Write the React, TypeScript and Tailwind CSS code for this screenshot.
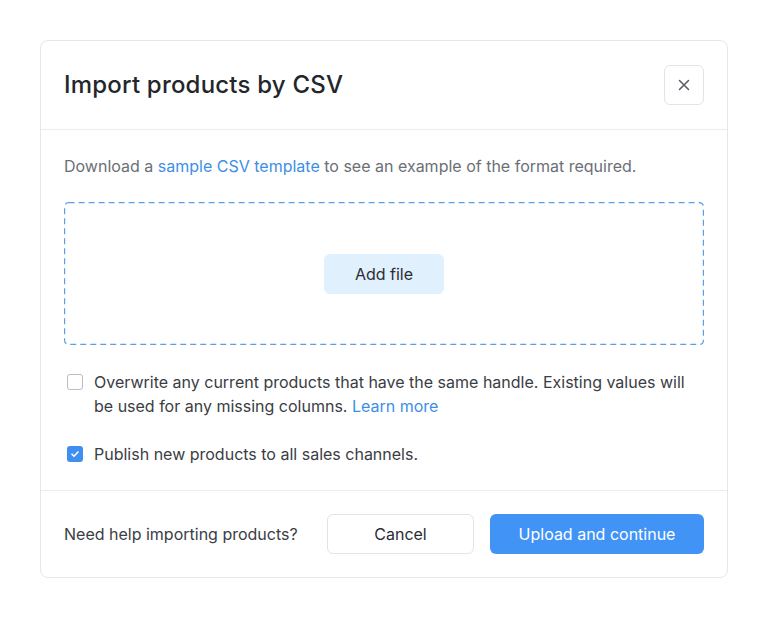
import React from 'react';

const CheckRow: React.FC<{ checked?: boolean; children: React.ReactNode }> = ({ checked, children }) => (
  <label className="flex items-start gap-[11px] pl-[3px]">
    <span
      className={
        checked
          ? 'mt-1 flex h-4 w-4 shrink-0 items-center justify-center rounded-[3px] bg-[#3f8ff0]'
          : 'mt-1 flex h-4 w-4 shrink-0 items-center justify-center rounded-[3px] border border-[#b9bcc2] bg-white'
      }
    >
      {checked && (
        <svg width="10" height="10" viewBox="0 0 10 10" fill="none">
          <path d="M2 5.2l2 2L8 3" stroke="white" strokeWidth="1.6" strokeLinecap="round" strokeLinejoin="round" />
        </svg>
      )}
    </span>
    <span className="text-base leading-6 text-[#3a3d44]">{children}</span>
  </label>
);

const ImportDialog: React.FC = () => {
  return (
    <div className="min-h-screen w-full bg-white p-10 font-['Inter',sans-serif]">
      <div className="w-[688px] rounded-lg border border-[#e6e7ea] bg-white">
        <div className="flex items-center justify-between border-b border-[#ebecee] px-[23px] py-6">
          <h1 className="text-2xl font-medium tracking-[0.2px] text-[#23262b]">Import products by CSV</h1>
          <button className="flex h-10 w-10 items-center justify-center rounded-md border border-[#e3e4e7] bg-white text-[#5b5e64]">
            <svg width="14" height="14" viewBox="0 0 14 14" fill="none">
              <path d="M2.5 2.5l9 9M11.5 2.5l-9 9" stroke="currentColor" strokeWidth="1.6" strokeLinecap="round" />
            </svg>
          </button>
        </div>

        <div className="px-[23px] pt-6 pb-6">
          <p className="text-base leading-6 text-[#6b6f76]">
            Download a <a className="text-[#3d8fe6]">sample CSV template</a> to see an example of the format required.
          </p>

          <div className="relative mt-6 flex h-[143px] items-center justify-center">
            <svg className="pointer-events-none absolute inset-0 h-full w-full overflow-visible">
              <rect
                x="0.6"
                y="0.6"
                width="638.8"
                height="141.8"
                rx="4"
                fill="none"
                stroke="#5b9fe6"
                strokeWidth="1.2"
                strokeDasharray="6 4"
              />
            </svg>
            <button className="h-10 w-[120px] rounded-md bg-[#e1f0fd] text-base text-[#2a2d33]">Add file</button>
          </div>

          <div className="mt-[25px] flex flex-col gap-6">
            <CheckRow>
              Overwrite any current products that have the same handle. Existing values will be used for any missing
              columns. <a className="text-[#3d8fe6]">Learn more</a>
            </CheckRow>
            <CheckRow checked>Publish new products to all sales channels.</CheckRow>
          </div>
        </div>

        <div className="flex items-center border-t border-[#ebecee] px-[23px] pt-[23px] pb-[23px]">
          <span className="flex-1 text-base text-[#3a3d44]">Need help importing products?</span>
          <button className="h-10 w-[147px] rounded-md border border-[#e3e4e7] bg-white text-base text-[#2a2d33]">
            Cancel
          </button>
          <button className="ml-4 h-10 w-[214px] rounded-md bg-[#4193f5] text-base text-white">
            Upload and continue
          </button>
        </div>
      </div>
    </div>
  );
};

export default ImportDialog;
